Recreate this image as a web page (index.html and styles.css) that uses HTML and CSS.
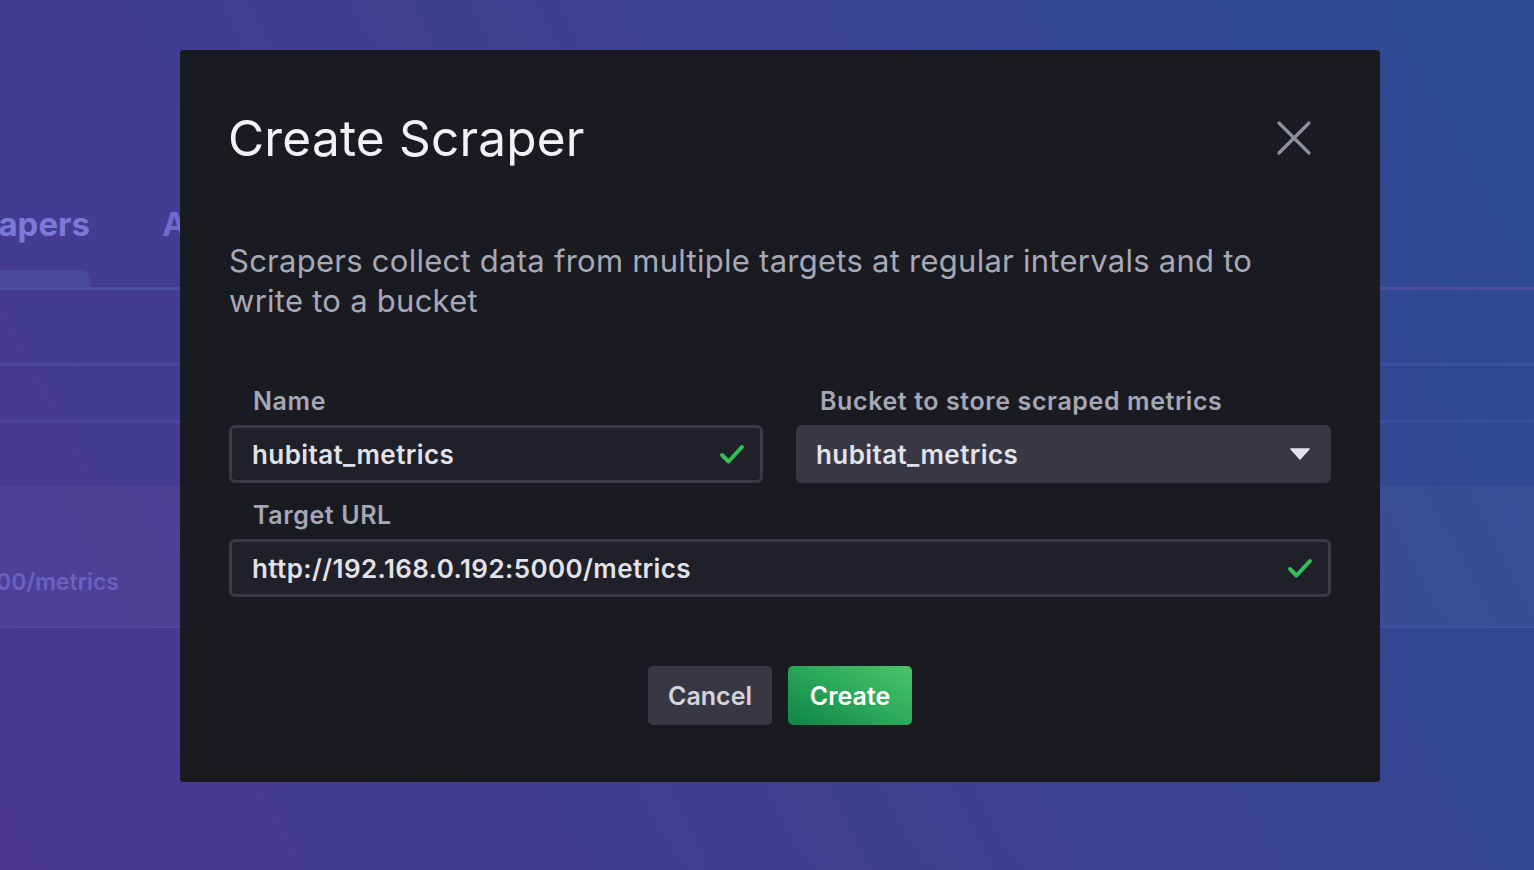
FILE: index.html
```html
<!DOCTYPE html>
<html>
<head>
<meta charset="utf-8">
<title>Create Scraper</title>
<link rel="stylesheet" href="styles.css">
</head>
<body>
<div class="page">
  <div class="tabs">
    <div class="tab tab-active"><span>Scrapers</span></div>
    <div class="tab"><span>API Tokens</span></div>
  </div>
  <div class="tab-rule"></div>
  <div class="list">
    <div class="list-head"></div>
    <div class="list-sub"></div>
    <div class="list-gap"></div>
    <div class="list-row"><span class="row-url">http://192.168.0.192:5000/metrics</span></div>
  </div>
</div>

<div class="overlay">
  <div class="modal">
    <div class="modal-header">
      <h1 class="modal-title">Create Scraper</h1>
      <button class="close" aria-label="Close">
        <svg width="36" height="36" viewBox="0 0 36 36"><path d="M3 3 L33 33 M33 3 L3 33" stroke="#8e909e" stroke-width="3.2" stroke-linecap="round" fill="none"/></svg>
      </button>
    </div>
    <p class="desc">Scrapers collect data from multiple targets at regular intervals and to write to a bucket</p>
    <div class="form-grid">
      <div class="field">
        <label class="label">Name</label>
        <div class="input">
          <span class="value">hubitat_metrics</span>
          <svg class="check" width="26" height="22" viewBox="0 0 26 22"><path d="M3 12 L9.5 18.5 L23 4" stroke="#34bf57" stroke-width="4" stroke-linecap="round" stroke-linejoin="round" fill="none"/></svg>
        </div>
      </div>
      <div class="field">
        <label class="label">Bucket to store scraped metrics</label>
        <div class="dropdown">
          <span class="value">hubitat_metrics</span>
          <svg class="caret" width="20" height="12" viewBox="0 0 20 12"><path d="M1 1 L19 1 L10 11 Z" fill="#e4e4ec" stroke="#e4e4ec" stroke-width="1.5" stroke-linejoin="round"/></svg>
        </div>
      </div>
      <div class="field field-wide">
        <label class="label">Target URL</label>
        <div class="input">
          <span class="value">http://192.168.0.192:5000/metrics</span>
          <svg class="check" width="26" height="22" viewBox="0 0 26 22"><path d="M3 12 L9.5 18.5 L23 4" stroke="#34bf57" stroke-width="4" stroke-linecap="round" stroke-linejoin="round" fill="none"/></svg>
        </div>
      </div>
    </div>
    <div class="actions">
      <button class="btn btn-default">Cancel</button>
      <button class="btn btn-success">Create</button>
    </div>
  </div>
</div>
</body>
</html>
```

FILE: styles.css
```css
* { box-sizing: border-box; }
html, body { margin: 0; padding: 0; }
body {
  width: 1534px;
  height: 870px;
  overflow: hidden;
  font-family: "Inter", "Noto Sans", sans-serif;
  background: linear-gradient(62deg, #4a3894 0%, #3f3f90 45%, #2c4b96 100%);
  position: relative;
}

/* background page */
.page {
  padding-top: 200px;
}
.tabs {
  display: flex;
  height: 87px;
}
.tab {
  display: flex;
  justify-content: flex-end;
  white-space: nowrap;
  font-weight: 700;
  font-size: 33px;
  line-height: 48px;
  color: #7d79d8;
  height: 87px;
}
.tab-active {
  width: 90px;
  position: relative;
}
.tab-active::after {
  content: "";
  position: absolute;
  left: 0;
  right: 0;
  bottom: 0;
  height: 17px;
  background: #4a479f;
  border-top-right-radius: 8px;
}
.tab + .tab {
  margin-left: 72px;
  color: #6f6ccc;
}
.tab-rule {
  height: 3px;
  background: #4a4fa3;
}
.list-head {
  height: 76px;
  border-bottom: 3px solid rgba(120, 120, 220, 0.16);
}
.list-sub {
  height: 57px;
  border-bottom: 3px solid rgba(120, 120, 220, 0.16);
}
.list-gap {
  height: 63px;
}
.list-row {
  height: 142px;
  background: rgba(255, 255, 255, 0.035);
  border-bottom: 2px solid rgba(120, 120, 220, 0.12);
  display: flex;
  align-items: flex-end;
  padding-bottom: 30px;
}
.row-url {
  width: 119px;
  display: flex;
  justify-content: flex-end;
  white-space: nowrap;
  font-size: 23px;
  font-weight: 600;
  color: #6a61c2;
}

/* modal */
.overlay {
  position: absolute;
  inset: 0;
}
.modal {
  position: absolute;
  left: 180px;
  top: 50px;
  width: 1200px;
  height: 732px;
  background: #1a1a21;
  border-radius: 4px;
  padding: 58px 49px 0 49px;
}
.modal-header {
  display: flex;
  align-items: center;
  justify-content: space-between;
  height: 60px;
}
.modal-title {
  margin: 0 0 0 -1px;
  font-size: 49.5px;
  font-weight: 400;
  line-height: 60px;
  color: #f1f1f6;
  letter-spacing: 0.2px;
}
.close {
  background: none;
  border: 0;
  padding: 0;
  width: 36px;
  height: 36px;
  margin-right: 19px;
  display: flex;
}
.desc {
  margin: 73px 0 0 0;
  font-size: 31px;
  line-height: 40px;
  color: #a6a9b7;
  max-width: 1080px;
  letter-spacing: 0.26px;
}
.form-grid {
  margin-top: 65px;
  display: grid;
  grid-template-columns: 534px 535px;
  column-gap: 33px;
  row-gap: 17px;
}
.field-wide { grid-column: 1 / 3; }
.label {
  display: block;
  height: 30px;
  line-height: 30px;
  font-size: 25px;
  font-weight: 600;
  color: #a4a7b5;
  padding-left: 24px;
  margin-bottom: 9px;
  letter-spacing: 0.6px;
}
.input, .dropdown {
  height: 58px;
  border-radius: 6px;
  display: flex;
  align-items: center;
  justify-content: space-between;
}
.input {
  background: #202028;
  border: 3px solid #3b3b47;
  padding: 0 15px 0 20px;
}
.dropdown {
  background: #383845;
  padding: 0 21px 0 20px;
}
.value {
  font-size: 26px;
  font-weight: 600;
  color: #e2e2ea;
  letter-spacing: 0.4px;
}
.check { display: block; }
.caret { display: block; }
.actions {
  margin-top: 69px;
  display: flex;
  justify-content: center;
  gap: 16px;
}
.btn {
  width: 124px;
  height: 59px;
  border: 0;
  border-radius: 5px;
  font-family: "Inter", "Noto Sans", sans-serif;
  font-size: 25px;
  font-weight: 600;
  padding: 0;
}
.btn-default {
  background: #383845;
  color: #d4d4de;
}
.btn-success {
  background: linear-gradient(30deg, #0e8447 0%, #2aa85a 50%, #4cc46c 100%);
  color: #ffffff;
}
```
